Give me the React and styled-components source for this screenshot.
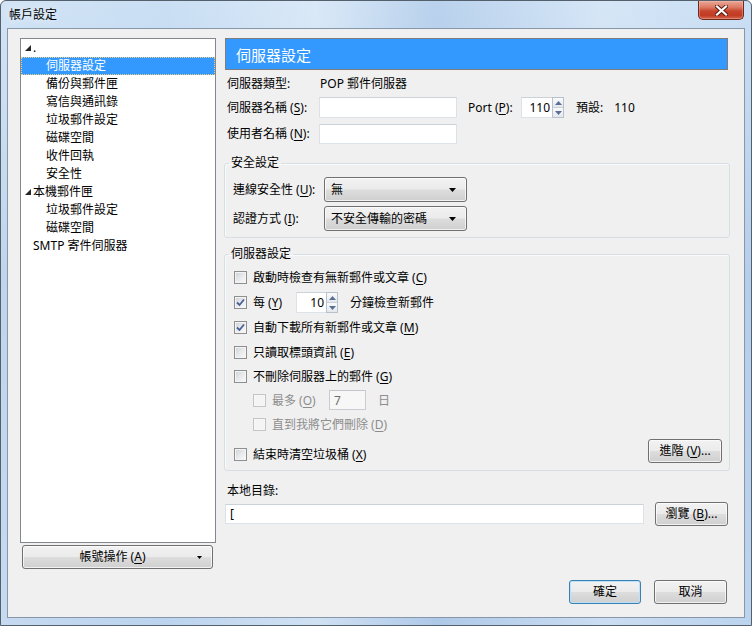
import styled, { createGlobalStyle, css } from 'styled-components';

const GlobalStyle = createGlobalStyle`
  * { box-sizing: border-box; }
  html, body { margin: 0; padding: 0; }
  body {
    font-family: 'Noto Sans', 'Noto Sans CJK TC', sans-serif;
    font-size: 12px;
    color: #000;
    background: #fff;
  }
  u { text-decoration: underline; text-underline-offset: 2px; }
`;

const Window = styled.div`
  width: 752px;
  height: 626px;
  display: flex;
  flex-direction: column;
  border: 1px solid #55606d;
  border-radius: 6px 6px 0 0;
  overflow: hidden;
  background:
    linear-gradient(90deg, rgba(255, 255, 255, 0.15) 0%, rgba(255, 255, 255, 0) 22%,
      rgba(255, 255, 255, 0.3) 42%, rgba(110, 150, 205, 0.18) 58%,
      rgba(255, 255, 255, 0.22) 80%, rgba(255, 255, 255, 0) 100%),
    linear-gradient(180deg, #cadff4 0%, #b5ceea 45%, #bcd4ee 100%);
`;

const TitleBar = styled.div`
  flex: none;
  height: 27px;
  display: flex;
  align-items: flex-start;
  padding-left: 8px;
`;

const TitleText = styled.span`
  margin-top: 6px;
  line-height: 16px;
  font-size: 12px;
  text-shadow: 0 0 8px rgba(255, 255, 255, 0.9);
`;

const CloseButton = styled.div`
  margin-left: auto;
  margin-right: 7px;
  width: 46px;
  height: 19px;
  display: flex;
  align-items: center;
  justify-content: center;
  border: 1px solid #6e2a1e;
  border-top: none;
  border-radius: 0 0 5px 5px;
  background: linear-gradient(180deg, #e9a898 0%, #dc7a64 35%, #c8452d 55%, #c23b24 80%, #d4674e 100%);
  box-shadow: inset 0 0 0 1px rgba(255, 200, 190, 0.35);
`;

const Client = styled.div`
  flex: none;
  margin: 0 6px;
  height: 590px;
  border: 1px solid #8796a8;
  background: #f0f0f0;
  padding: 9px 14px 0 12px;
  display: flex;
  flex-direction: column;
`;

const Main = styled.div`
  display: flex;
  gap: 8px;
  height: 531px;
`;

const LeftCol = styled.div`
  width: 196px;
  display: flex;
  flex-direction: column;
`;

const Tree = styled.div`
  height: 505px;
  background: #fff;
  border: 1px solid #828790;
  line-height: 18px;
`;

const TreeRow = styled.div`
  height: 18px;
  display: flex;
  align-items: center;
  white-space: nowrap;
  padding-left: ${(p) => p.$indent}px;
  ${(p) =>
    p.$selected &&
    css`
      background: #3399ff;
      color: #fff;
      outline: 1px dotted #f1cf7c;
      outline-offset: -1px;
    `}
`;

const Twisty = styled.span`
  width: 8px;
  display: flex;
  align-items: center;
`;

const Btn = styled.div`
  height: 24px;
  width: ${(p) => p.$w}px;
  display: flex;
  align-items: center;
  justify-content: center;
  border: 1px solid ${(p) => (p.$default ? '#3c7fb1' : '#707070')};
  border-radius: 3px;
  background: linear-gradient(180deg, #f2f2f2 0%, #ebebeb 48%, #dddddd 52%, #cfcfcf 100%);
  box-shadow: inset 0 0 0 1px ${(p) => (p.$default ? '#b9e2fa' : 'rgba(255, 255, 255, 0.7)')};
  line-height: 16px;
  white-space: nowrap;
`;

const MenuBtn = styled(Btn)`
  margin: 2px 0 0 2px;
  display: grid;
  grid-template-columns: 1fr auto 1fr;
  align-items: center;
  padding-right: 10px;
  & > svg {
    justify-self: end;
  }
`;

const RightCol = styled.div`
  flex: 1;
  display: flex;
  flex-direction: column;
`;

const Header = styled.div`
  margin-left: 1px;
  width: 503px;
  height: 32px;
  display: flex;
  align-items: center;
  padding-left: 10px;
  background: #3399ff;
  border: 1px solid #7d7d7d;
  color: #fff;
  font-size: 15px;
`;

const Row = styled.div`
  display: flex;
  align-items: center;
  height: ${(p) => p.$h || 21}px;
  margin-top: ${(p) => p.$mt || 0}px;
  padding-left: ${(p) => (p.$pl === undefined ? 3 : p.$pl)}px;
  line-height: 16px;
  white-space: nowrap;
  color: ${(p) => (p.$disabled ? '#8d8d8d' : '#000')};
`;

const Label = styled.span`
  flex: none;
  width: ${(p) => (p.$w ? `${p.$w}px` : 'auto')};
  margin-left: ${(p) => p.$ml || 0}px;
`;

const TextBox = styled.div`
  flex: none;
  width: ${(p) => p.$w}px;
  height: ${(p) => p.$h || 21}px;
  margin-left: ${(p) => p.$ml || 0}px;
  display: flex;
  align-items: center;
  padding-left: 4px;
  background: ${(p) => (p.$disabled ? '#f7f7f7' : '#fff')};
  color: ${(p) => (p.$disabled ? '#6d6d6d' : '#000')};
  border: 1px solid ${(p) => (p.$disabled ? '#c9cdd3' : '#dde2e8')};
  border-top-color: ${(p) => (p.$disabled ? '#c2c6cc' : '#cdd2d9')};
  overflow: hidden;
`;

const SpinBox = styled.div`
  flex: none;
  display: flex;
  width: ${(p) => p.$w}px;
  height: 21px;
  margin-left: ${(p) => p.$ml || 0}px;
`;

const SpinText = styled.div`
  flex: 1;
  display: flex;
  align-items: center;
  justify-content: flex-end;
  padding-right: 2px;
  background: #fff;
  border: 1px solid #dde2e8;
  border-right: none;
  border-top-color: #cdd2d9;
`;

const SpinButtons = styled.div`
  width: 12px;
  display: flex;
  flex-direction: column;
  border: 1px solid #b9c1cc;
  background: #f4f4f4;
`;

const SpinHalf = styled.div`
  flex: 1;
  display: flex;
  align-items: center;
  justify-content: center;
  background: linear-gradient(180deg, #fafafa, #e4e8ee);
  & + & {
    border-top: 1px solid #c9d0d9;
  }
`;

const Group = styled.fieldset`
  margin: ${(p) => p.$mt}px 0 0 0;
  padding: ${(p) => p.$pt}px 7px ${(p) => p.$pb}px 8px;
  border: 1px solid #d5dfe5;
  border-radius: 3px;
  box-shadow: inset 1px 1px 0 #fafafa;
  min-width: 0;
`;

const Legend = styled.legend`
  padding: 0 2px;
  margin-left: -4px;
  line-height: 16px;
`;

const Combo = styled(Btn)`
  width: 143px;
  height: 25px;
  justify-content: space-between;
  padding: 0 10px 0 6px;
`;

const GroupRow = styled.div`
  display: flex;
  align-items: ${(p) => (p.$bottom ? 'flex-end' : 'center')};
  justify-content: ${(p) => (p.$spread ? 'space-between' : 'flex-start')};
  height: ${(p) => p.$h || 24}px;
  margin-top: ${(p) => p.$mt || 0}px;
  padding-left: ${(p) => p.$pl || 0}px;
  line-height: 17px;
  white-space: nowrap;
  color: ${(p) => (p.$disabled ? '#8d8d8d' : '#000')};
`;

const CheckLabel = styled.div`
  display: flex;
  align-items: center;
  gap: 6px;
  flex: none;
  width: ${(p) => (p.$w ? `${p.$w}px` : 'auto')};
`;

const Box = styled.span`
  flex: none;
  width: 13px;
  height: 13px;
  display: flex;
  align-items: center;
  justify-content: center;
  border: 1px solid ${(p) => (p.$disabled ? '#c4c4c4' : '#8e8f8f')};
  background: ${(p) =>
    p.$disabled ? '#f4f4f4' : 'linear-gradient(135deg, #cdd0d4 0%, #e8e9eb 50%, #fbfbfb 100%)'};
  box-shadow: inset 0 0 0 1px ${(p) => (p.$disabled ? '#f7f7f7' : '#f4f4f4')};
`;

const Footer = styled.div`
  display: flex;
  justify-content: flex-end;
  gap: 13px;
  margin-top: 11px;
  padding-right: 3px;
`;

function Triangle() {
  return (
    <svg width="6" height="6" viewBox="0 0 6 6">
      <polygon points="6,0 6,6 0,6" fill="#262626" />
    </svg>
  );
}

function DownArrow({ w = 7, h = 4 }) {
  return (
    <svg width={w} height={h} viewBox={`0 0 ${w} ${h}`}>
      <polygon points={`0,0 ${w},0 ${w / 2},${h}`} fill="#000" />
    </svg>
  );
}

function Check({ checked, disabled }) {
  return (
    <Box $disabled={disabled}>
      {checked && (
        <svg width="9" height="9" viewBox="0 0 9 9">
          <path d="M1 4.5 L3.5 7 L8 1.5" stroke="#4a5f97" strokeWidth="1.8" fill="none" />
        </svg>
      )}
    </Box>
  );
}

function Spin({ value, w, ml }) {
  return (
    <SpinBox $w={w} $ml={ml}>
      <SpinText>{value}</SpinText>
      <SpinButtons>
        <SpinHalf>
          <svg width="7" height="4" viewBox="0 0 7 4">
            <polygon points="0,4 7,4 3.5,0" fill="#5a6f93" />
          </svg>
        </SpinHalf>
        <SpinHalf>
          <svg width="7" height="4" viewBox="0 0 7 4">
            <polygon points="0,0 7,0 3.5,4" fill="#5a6f93" />
          </svg>
        </SpinHalf>
      </SpinButtons>
    </SpinBox>
  );
}

const treeItems = [
  { text: '.', indent: 4, twisty: true },
  { text: '伺服器設定', indent: 25, selected: true },
  { text: '備份與郵件匣', indent: 25 },
  { text: '寫信與通訊錄', indent: 25 },
  { text: '垃圾郵件設定', indent: 25 },
  { text: '磁碟空間', indent: 25 },
  { text: '收件回執', indent: 25 },
  { text: '安全性', indent: 25 },
  { text: '本機郵件匣', indent: 4, twisty: true },
  { text: '垃圾郵件設定', indent: 25 },
  { text: '磁碟空間', indent: 25 },
  { text: 'SMTP 寄件伺服器', indent: 12 },
];

export default function App() {
  return (
    <>
      <GlobalStyle />
      <Window>
        <TitleBar>
          <TitleText>帳戶設定</TitleText>
          <CloseButton>
            <svg width="13" height="11" viewBox="0 0 13 11">
              <path d="M2 1.5 L11 9.5 M11 1.5 L2 9.5" stroke="#5a1a10" strokeWidth="4" strokeLinecap="square" />
              <path d="M2 1.5 L11 9.5 M11 1.5 L2 9.5" stroke="#ffffff" strokeWidth="2.2" strokeLinecap="square" />
            </svg>
          </CloseButton>
        </TitleBar>

        <Client>
          <Main>
            <LeftCol>
              <Tree>
                {treeItems.map((item, i) => (
                  <TreeRow key={i} $indent={item.indent} $selected={item.selected}>
                    {item.twisty && (
                      <Twisty>
                        <Triangle />
                      </Twisty>
                    )}
                    {item.text}
                  </TreeRow>
                ))}
              </Tree>
              <MenuBtn $w={191}>
                <span />
                <span>
                  帳號操作 (<u>A</u>)
                </span>
                <DownArrow w={5} h={3} />
              </MenuBtn>
            </LeftCol>

            <RightCol>
              <Header>伺服器設定</Header>

              <Row $h={20} $mt={4}>
                <Label $w={92}>伺服器類型:</Label>
                <Label $ml={1}>POP 郵件伺服器</Label>
              </Row>

              <Row $mt={3}>
                <Label $w={92}>
                  伺服器名稱 (<u>S</u>):
                </Label>
                <TextBox $w={138} />
                <Label $w={53} $ml={11}>
                  Port (<u>P</u>):
                </Label>
                <Spin value="110" w={43} />
                <Label $ml={12}>預設:</Label>
                <Label $ml={11}>110</Label>
              </Row>

              <Row $mt={5}>
                <Label $w={92}>
                  使用者名稱 (<u>N</u>):
                </Label>
                <TextBox $w={138} $h={20} />
              </Row>

              <Group $mt={11} $pt={6} $pb={6}>
                <Legend>安全設定</Legend>
                <Row $h={25} $pl={0}>
                  <Label $w={91}>
                    連線安全性 (<u>U</u>):
                  </Label>
                  <Combo>
                    <span>無</span>
                    <DownArrow />
                  </Combo>
                </Row>
                <Row $h={25} $mt={4} $pl={0}>
                  <Label $w={91}>
                    認證方式 (<u>I</u>):
                  </Label>
                  <Combo>
                    <span>不安全傳輸的密碼</span>
                    <DownArrow />
                  </Combo>
                </Row>
              </Group>

              <Group $mt={8} $pt={3} $pb={7}>
                <Legend>伺服器設定</Legend>
                <GroupRow $h={25} $pl={1}>
                  <CheckLabel>
                    <Check />
                    <span>
                      啟動時檢查有無新郵件或文章 (<u>C</u>)
                    </span>
                  </CheckLabel>
                </GroupRow>
                <GroupRow $h={25} $pl={1}>
                  <CheckLabel $w={62}>
                    <Check checked />
                    <span>
                      每 (<u>Y</u>)
                    </span>
                  </CheckLabel>
                  <Spin value="10" w={42} />
                  <Label $ml={12}>分鐘檢查新郵件</Label>
                </GroupRow>
                <GroupRow $h={25} $pl={1}>
                  <CheckLabel>
                    <Check checked />
                    <span>
                      自動下載所有新郵件或文章 (<u>M</u>)
                    </span>
                  </CheckLabel>
                </GroupRow>
                <GroupRow $pl={1}>
                  <CheckLabel>
                    <Check />
                    <span>
                      只讀取標頭資訊 (<u>E</u>)
                    </span>
                  </CheckLabel>
                </GroupRow>
                <GroupRow $pl={1}>
                  <CheckLabel>
                    <Check />
                    <span>
                      不刪除伺服器上的郵件 (<u>G</u>)
                    </span>
                  </CheckLabel>
                </GroupRow>
                <GroupRow $pl={20} $disabled>
                  <CheckLabel $w={76}>
                    <Check disabled />
                    <span>
                      最多 (<u>O</u>)
                    </span>
                  </CheckLabel>
                  <TextBox $w={37} $h={20} $disabled>
                    7
                  </TextBox>
                  <Label $ml={12}>日</Label>
                </GroupRow>
                <GroupRow $pl={20} $disabled>
                  <CheckLabel>
                    <Check disabled />
                    <span>
                      直到我將它們刪除 (<u>D</u>)
                    </span>
                  </CheckLabel>
                </GroupRow>
                <GroupRow $mt={3} $pl={1} $bottom $spread>
                  <CheckLabel>
                    <Check />
                    <span>
                      結束時清空垃圾桶 (<u>X</u>)
                    </span>
                  </CheckLabel>
                  <Btn $w={74}>
                    進階 (<u>V</u>)...
                  </Btn>
                </GroupRow>
              </Group>

              <Row $h={17} $mt={11}>
                <Label>本地目錄:</Label>
              </Row>
              <Row $h={24} $mt={3} $pl={1}>
                <TextBox $w={419} $h={20}>
                  [
                </TextBox>
                <Btn $w={73} style={{ marginLeft: 11 }}>
                  瀏覽 (<u>B</u>)...
                </Btn>
              </Row>
            </RightCol>
          </Main>

          <Footer>
            <Btn $w={72} $default>
              確定
            </Btn>
            <Btn $w={73}>取消</Btn>
          </Footer>
        </Client>
      </Window>
    </>
  );
}
